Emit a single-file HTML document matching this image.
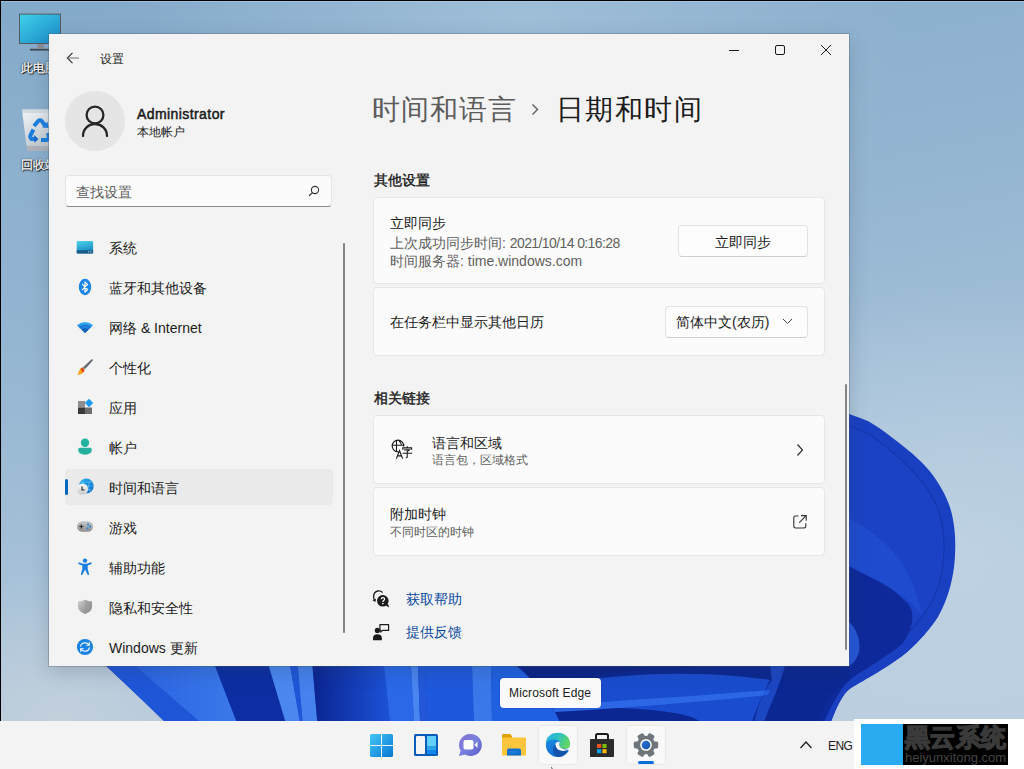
<!DOCTYPE html>
<html><head><meta charset="utf-8">
<style>
*{margin:0;padding:0;box-sizing:border-box}
html,body{width:1024px;height:769px;overflow:hidden}
body{position:relative;font-family:"Liberation Sans",sans-serif;color:#1b1b1b;background:#8fb2cf}
.a{position:absolute;white-space:nowrap}
#wall{position:absolute;left:0;top:0;width:1024px;height:769px}
#win{position:absolute;left:49px;top:34px;width:800px;height:632px;background:#f3f3f3;box-shadow:0 0 0 1px rgba(70,90,110,.3),0 6px 18px rgba(40,60,80,.22)}
.t14{font-size:14px;line-height:14px}
.t12{font-size:12px;line-height:12px}
.card{position:absolute;left:324px;width:452px;background:#fbfbfb;border:1px solid #e6e6e6;border-radius:4px}
.btn{position:absolute;background:#fdfdfd;border:1px solid #e3e3e3;border-bottom-color:#cfcfcf;border-radius:4px}
.sec{color:#5f5f5f}
.nav{position:absolute;left:60px;font-size:14px;line-height:14px;color:#1b1b1b}
.ico{position:absolute}
#taskbar{position:absolute;left:0;top:721px;width:1024px;height:48px;background:#f3f3f3}
</style></head><body>
<svg id="wall" width="1024" height="769" viewBox="0 0 1024 769">
<defs>
<linearGradient id="bg" x1="0" y1="0" x2="0.25" y2="1">
<stop offset="0" stop-color="#84aac9"/><stop offset="0.5" stop-color="#98b8d3"/><stop offset="1" stop-color="#b9cddf"/>
</linearGradient>
<radialGradient id="halo" cx="0.93" cy="0.72" r="0.35">
<stop offset="0" stop-color="#bed2e3" stop-opacity="0.9"/><stop offset="1" stop-color="#bed2e3" stop-opacity="0"/>
</radialGradient>
<linearGradient id="outer" x1="0" y1="0" x2="1" y2="0">
<stop offset="0" stop-color="#1a46cc"/><stop offset="1" stop-color="#2254da"/>
</linearGradient>
<linearGradient id="pet1" x1="0" y1="0" x2="1" y2="0">
<stop offset="0" stop-color="#2d6ae6"/><stop offset="1" stop-color="#1848c8"/>
</linearGradient>
<linearGradient id="dark" x1="0" y1="0" x2="1" y2="0">
<stop offset="0" stop-color="#0a2a98"/><stop offset="1" stop-color="#1a48c8"/>
</linearGradient>
<linearGradient id="inn" gradientUnits="userSpaceOnUse" x1="849" y1="0" x2="945" y2="0"><stop offset="0" stop-color="#0b2894"/><stop offset="0.5" stop-color="#1840c0"/><stop offset="1" stop-color="#1d48ca"/></linearGradient>
<linearGradient id="lobe" gradientUnits="userSpaceOnUse" x1="849" y1="0" x2="915" y2="0"><stop offset="0" stop-color="#0e2c9c"/><stop offset="1" stop-color="#2152d4"/></linearGradient>
<linearGradient id="b2" x1="0" y1="0" x2="1" y2="0"><stop offset="0" stop-color="#2a64e2"/><stop offset="1" stop-color="#3a78ea"/></linearGradient>
<linearGradient id="b3" x1="0" y1="0" x2="1" y2="0"><stop offset="0" stop-color="#0a2490"/><stop offset="1" stop-color="#1c52d8"/></linearGradient>
<radialGradient id="tophi" gradientUnits="userSpaceOnUse" cx="520" cy="10" r="380"><stop offset="0" stop-color="#a6c3dc" stop-opacity="0.75"/><stop offset="1" stop-color="#a6c3dc" stop-opacity="0"/></radialGradient>
<radialGradient id="blhi" gradientUnits="userSpaceOnUse" cx="60" cy="730" r="160"><stop offset="0" stop-color="#c8d2dc" stop-opacity="0.8"/><stop offset="1" stop-color="#c8d2dc" stop-opacity="0"/></radialGradient>
</defs>
<rect width="1024" height="769" fill="url(#bg)"/>
<rect width="1024" height="769" fill="url(#halo)"/>
<rect width="1024" height="769" fill="url(#tophi)"/>
<rect width="1024" height="769" fill="url(#blhi)"/>
<!-- base bloom -->
<path d="M849.4 414.1 C853.0 415.6 864.1 419.0 871.2 422.9 C878.3 426.8 885.1 432.2 892.0 437.4 C898.9 442.6 906.6 448.4 912.8 454.0 C919.0 459.6 924.5 464.8 929.4 470.7 C934.3 476.6 938.5 483.2 942.0 489.4 C945.5 495.6 948.1 501.4 950.2 508.0 C952.3 514.6 953.6 522.0 954.4 529.0 C955.2 536.0 955.4 542.7 955.2 550.0 C955.0 557.3 954.5 565.2 953.2 572.8 C951.9 580.4 950.0 588.3 947.5 595.5 C945.0 602.7 942.2 609.5 938.4 616.0 C934.6 622.5 930.0 628.1 924.7 634.2 C919.4 640.3 913.3 646.7 906.5 652.4 C899.7 658.1 891.3 663.5 883.7 668.4 C876.1 673.3 867.1 678.2 861.0 682.0 C854.9 685.8 851.1 687.3 847.3 691.1 C843.5 694.9 840.9 699.9 838.2 704.8 C835.6 709.7 833.4 716.5 831.4 720.7 C829.4 724.9 826.9 728.5 826.0 730.0 L174.3 730 L106 666 L70 630 L600 420 Z" fill="#1a40c2"/>
<path d="M849.0 426.0 C852.2 427.3 861.8 430.5 868.0 434.0 C874.2 437.5 880.0 442.3 886.0 447.0 C892.0 451.7 898.5 456.8 904.0 462.0 C909.5 467.2 914.5 472.5 919.0 478.0 C923.5 483.5 927.7 489.3 931.0 495.0 C934.3 500.7 937.0 506.0 939.0 512.0 C941.0 518.0 942.2 524.7 943.0 531.0 C943.8 537.3 944.2 543.5 944.0 550.0 C943.8 556.5 943.2 563.3 942.0 570.0 C940.8 576.7 939.3 583.7 937.0 590.0 C934.7 596.3 931.7 602.2 928.0 608.0 C924.3 613.8 920.0 619.3 915.0 625.0 C910.0 630.7 904.5 636.7 898.0 642.0 C891.5 647.3 883.2 652.2 876.0 657.0 C868.8 661.8 860.7 667.0 855.0 671.0 C849.3 675.0 846.2 676.8 842.0 681.0 C837.8 685.2 833.3 690.8 830.0 696.0 C826.7 701.2 824.3 706.3 822.0 712.0 C819.7 717.7 817.0 727.0 816.0 730.0 L700 730 L700 426 Z" fill="#1b42c4" stroke="#1636ae" stroke-width="1.2"/>
<path d="M849.0 560.0 C852.5 562.5 862.3 569.7 870.0 575.0 C877.7 580.3 888.0 585.8 895.0 592.0 C902.0 598.2 910.3 604.0 912.0 612.0 C913.7 620.0 910.3 632.0 905.0 640.0 C899.7 648.0 889.2 653.3 880.0 660.0 C870.8 666.7 857.5 673.3 850.0 680.0 C842.5 686.7 839.3 693.0 835.0 700.0 C830.7 707.0 825.8 718.3 824.0 722.0 L780 722 L780 560 Z" fill="#0e2a9a"/>
<path d="M849.0 518.0 C853.3 520.8 866.5 528.0 875.0 535.0 C883.5 542.0 893.3 550.8 900.0 560.0 C906.7 569.2 911.3 580.8 915.0 590.0 C918.7 599.2 920.8 610.8 922.0 615.0  C919.2 612.2 912.0 603.5 905.0 598.0 C898.0 592.5 887.5 586.3 880.0 582.0 C872.5 577.7 865.2 574.7 860.0 572.0 C854.8 569.3 850.8 567.0 849.0 566.0 Z" fill="#1f4ccf"/>
<path d="M849 622 C856 628 861 640 859 652 C857 660 852 664 849 666 Z" fill="#2656d6"/>
<path d="M938.4 616.0 C936.1 619.0 930.0 628.1 924.7 634.2 C919.4 640.3 913.3 646.7 906.5 652.4 C899.7 658.1 891.3 663.5 883.7 668.4 C876.1 673.3 867.1 678.2 861.0 682.0 C854.9 685.8 851.1 687.3 847.3 691.1 C843.5 694.9 840.9 699.9 838.2 704.8 C835.6 709.7 832.5 718.1 831.4 720.7 L826 722  C827.0 719.3 829.3 711.0 832.0 706.0 C834.7 701.0 838.0 696.3 842.0 692.0 C846.0 687.7 850.0 684.5 856.0 680.0 C862.0 675.5 870.7 670.2 878.0 665.0 C885.3 659.8 893.3 654.5 900.0 649.0 C906.7 643.5 913.0 637.5 918.0 632.0 C923.0 626.5 928.0 618.7 930.0 616.0 Z" fill="#1a3fc0"/>
<path d="M106 665 L164.7 722 L200 722 L134 665 Z" fill="#1f56d8"/>
<path d="M134 665 L200 722 L236.7 722 L214.7 665 Z" fill="url(#b2)"/>
<path d="M214.7 665 L236.7 722 L285.5 722 L268.5 665 Z" fill="#0c2ea2"/>
<path d="M268.5 665 L285.5 722 L300 722 L290 665 Z" fill="#4a88f0"/>
<path d="M290 665 L300 722 L302.6 722 L297.8 665 Z" fill="#1f56d8"/>
<path d="M297.8 665 L302.6 722 L317.3 722 L312.4 665 Z" fill="#4582ee"/>
<path d="M312.4 665 L317.3 722 L390 722 L384 665 Z" fill="url(#b3)"/>
<path d="M384 665 L390 722 L414 722 L411 665 Z" fill="#2a68e8"/>
<path d="M411 665 L414 722 L420 722 L418 665 Z" fill="#4a86f0"/>
<path d="M418 665 L420 722 L427 722 L425 665 Z" fill="#2258d8"/>
<path d="M425 665 L427 722 L474 722 L472 665 Z" fill="#1e58dc"/>
<path d="M472 665 L474 722 L492 722 L491 665 Z" fill="#3a78ea"/>
<path d="M491 665 L492 722 L560 722 C550 700 535 680 515 665 Z" fill="#2060e0"/>
<path d="M515 665 C535 680 550 700 560 722 L818 722 C822 712 826 701 832 694 L849 680 L849 665 Z" fill="#0b2792"/>
<path d="M535 684 C600 672 680 666 760 666 L520 665 Z" fill="#0a2388"/>
<path d="M540 688 C600 675 690 668 770 680 C765 690 760 700 752 722 L700 722 C690 712 640 706 553 708 C550 700 545 694 540 688 Z" fill="#1a4ccf"/>
<path d="M552 706 C620 700 700 696 770 690 L768 695 C700 702 620 708 555 712 Z" fill="#2c68e6"/>
<path d="M770 666 L785 666 C778 690 770 705 764 722 L754 722 C758 705 764 690 772 680 Z" fill="#2456d8" opacity="0.7"/>

</svg>
<div class="a" style="left:0;top:0;width:1024px;height:1px;background:#000"></div>
<div class="a" style="left:0;top:1px;width:1024px;height:1px;background:rgba(170,205,235,.6)"></div>
<div class="a" style="left:0;top:0;width:1px;height:721px;background:#000"></div>


<!-- desktop icons -->
<svg class="a" style="left:18px;top:12px" width="45" height="40" viewBox="0 0 45 40"><defs><linearGradient id="mon" x1="0" y1="0" x2="1" y2="1"><stop offset="0" stop-color="#3fd0e8"/><stop offset="1" stop-color="#1a88c8"/></linearGradient></defs><rect x="1" y="1.6" width="42" height="30.4" fill="#555a60"/><rect x="2" y="2.6" width="40" height="28.4" fill="url(#mon)"/><rect x="19.3" y="32" width="6.7" height="4.5" fill="#8a8f94"/><rect x="12" y="36.8" width="22" height="1.8" fill="#454a50"/></svg>
<div class="a" style="left:21px;top:61px;font-size:12px;line-height:14px;color:#fff;-webkit-text-stroke:0.3px #fff;text-shadow:0 0 2px #000,1px 1px 1px #000,0 0 1px #000">此电脑</div>
<svg class="a" style="left:20px;top:106px" width="29" height="46" viewBox="0 0 29 46"><defs><linearGradient id="rb" x1="0" y1="0" x2="0.3" y2="1"><stop offset="0" stop-color="#eef2f5"/><stop offset="1" stop-color="#c4ccd2"/></linearGradient></defs><path d="M2 3.2 H30 V7 H2.4 Z" fill="#d4dbe0"/><path d="M2.4 7 H30 V40 H6.5 Z" fill="url(#rb)"/><path d="M6.5 40 H30 V45 H7 Z" fill="#adb3b8"/><path d="M14 20 L18.5 14.8 Q20 13.6 21.6 14.8 L25 19.5" fill="none" stroke="#1c7fe0" stroke-width="4"/><path d="M22 21.5 L28.5 22 L27.5 15.5 Z" fill="#1c7fe0"/><path d="M13.5 23.5 L10.4 29.5 Q9.8 31.5 11.5 33 L15.5 33" fill="none" stroke="#1c7fe0" stroke-width="4"/><path d="M14.5 36.8 L18.5 33 L14 29 Z" fill="#1466c8"/><path d="M21 34 L26.5 34 Q28.5 33.5 29 31.5 L28 27" fill="none" stroke="#1c7fe0" stroke-width="4"/></svg>
<div class="a" style="left:21px;top:158px;font-size:12px;line-height:14px;color:#fff;-webkit-text-stroke:0.3px #fff;text-shadow:0 0 2px #000,1px 1px 1px #000,0 0 1px #000">回收站</div>

<div id="win"></div>
<!-- title bar -->
<svg class="a" style="left:66px;top:52px" width="14" height="12" viewBox="0 0 14 12"><path d="M6.5 0.8 L1.3 6 L6.5 11.2" fill="none" stroke="#303030" stroke-width="1.1"/><path d="M1.5 6 H13" stroke="#7a7a7a" stroke-width="1.1"/></svg>
<div class="a t12" style="left:100px;top:53px;color:#1b1b1b">设置</div>
<svg class="a" style="left:728px;top:44px" width="106" height="12" viewBox="0 0 106 12"><path d="M1 6.5 H11" stroke="#1b1b1b" stroke-width="1"/><rect x="47.5" y="1.5" width="9" height="9" rx="1.5" fill="none" stroke="#1b1b1b" stroke-width="1"/><path d="M93 1 L103 11 M103 1 L93 11" stroke="#1b1b1b" stroke-width="1"/></svg>
<!-- user -->
<div class="a" style="left:65px;top:91px;width:60px;height:60px;border-radius:50%;background:#e5e5e5"></div>
<svg class="a" style="left:80px;top:104px" width="30" height="34" viewBox="0 0 30 34"><circle cx="15" cy="11" r="8.4" fill="none" stroke="#262626" stroke-width="2.3"/><path d="M3 32 C3 25 8.5 20 15 20 C21.5 20 27 25 27 32" fill="none" stroke="#262626" stroke-width="2.3" stroke-linecap="round"/></svg>
<div class="a" style="left:137px;top:107px;font-size:14px;line-height:14px;-webkit-text-stroke:0.5px #1b1b1b;color:#1b1b1b;letter-spacing:0.42px">Administrator</div>
<div class="a t12" style="left:137px;top:126px">本地帐户</div>
<!-- search -->
<div class="a" style="left:65px;top:175px;width:267px;height:32px;background:#fbfbfb;border:1px solid #e5e5e5;border-bottom:1px solid #8c8c8c;border-radius:4px"></div>
<div class="a t14" style="left:76px;top:185px;color:#5d5d5d">查找设置</div>
<svg class="a" style="left:308px;top:185px" width="12" height="12" viewBox="0 0 12 12"><circle cx="7" cy="5" r="3.6" fill="none" stroke="#303030" stroke-width="1.1"/><path d="M4.4 7.6 L1 11" stroke="#303030" stroke-width="1.1"/></svg>
<!-- nav -->
<div class="a" style="left:65px;top:469px;width:268px;height:36px;background:#eaeaea;border-radius:4px"></div>
<div class="a" style="left:65px;top:479px;width:3px;height:16px;background:#0067c0;border-radius:2px"></div>
<div class="nav a" style="left:109px;top:241px">系统</div>
<div class="nav a" style="left:109px;top:281px">蓝牙和其他设备</div>
<div class="nav a" style="left:109px;top:321px">网络 &amp; Internet</div>
<div class="nav a" style="left:109px;top:361px">个性化</div>
<div class="nav a" style="left:109px;top:401px">应用</div>
<div class="nav a" style="left:109px;top:441px">帐户</div>
<div class="nav a" style="left:109px;top:481px">时间和语言</div>
<div class="nav a" style="left:109px;top:521px">游戏</div>
<div class="nav a" style="left:109px;top:561px">辅助功能</div>
<div class="nav a" style="left:109px;top:601px">隐私和安全性</div>
<div class="nav a" style="left:109px;top:641px">Windows 更新</div>
<div class="a" style="left:343px;top:243px;width:2px;height:390px;background:#858585;border-radius:1px"></div>
<!-- content -->
<div class="a" style="left:372px;top:96px;font-size:28px;line-height:28px;color:#5c5c5c;letter-spacing:0.9px">时间和语言</div>
<svg class="a" style="left:530px;top:103px" width="10" height="13" viewBox="0 0 10 13"><path d="M2.5 1.5 L7.5 6.5 L2.5 11.5" fill="none" stroke="#5c5c5c" stroke-width="1.4"/></svg>
<div class="a" style="left:556px;top:96px;font-size:28px;line-height:28px;color:#1b1b1b;letter-spacing:1.4px">日期和时间</div>
<div class="a t14" style="left:374px;top:173px;-webkit-text-stroke:0.4px #1b1b1b">其他设置</div>
<div class="card" style="left:373px;top:197px;width:452px;height:87px"></div>
<div class="a t14" style="left:390px;top:216px">立即同步</div>
<div class="a t14 sec" style="left:390px;top:236px">上次成功同步时间: <span style="letter-spacing:-0.6px">2021/10/14 0:16:28</span></div>
<div class="a t14 sec" style="left:390px;top:254px">时间服务器: time.windows.com</div>
<div class="btn" style="left:678px;top:225px;width:130px;height:32px"></div>
<div class="a t14" style="left:678px;top:235px;width:130px;text-align:center">立即同步</div>
<div class="card" style="left:373px;top:287px;width:452px;height:69px"></div>
<div class="a t14" style="left:390px;top:315px">在任务栏中显示其他日历</div>
<div class="btn" style="left:665px;top:306px;width:143px;height:32px"></div>
<div class="a t14" style="left:676px;top:315px">简体中文(农历)</div>
<svg class="a" style="left:782px;top:318px" width="11" height="7" viewBox="0 0 11 7"><path d="M1 1 L5.5 5.5 L10 1" fill="none" stroke="#404040" stroke-width="1"/></svg>
<div class="a t14" style="left:374px;top:391px;-webkit-text-stroke:0.4px #1b1b1b">相关链接</div>
<div class="card" style="left:373px;top:415px;width:452px;height:69px"></div>
<div class="a t14" style="left:432px;top:436px">语言和区域</div>
<div class="a t12 sec" style="left:432px;top:454px">语言包，区域格式</div>
<svg class="a" style="left:795px;top:443px" width="10" height="14" viewBox="0 0 10 14"><path d="M2.5 1.5 L7.5 7 L2.5 12.5" fill="none" stroke="#303030" stroke-width="1.2"/></svg>
<div class="card" style="left:373px;top:487px;width:452px;height:69px"></div>
<div class="a t14" style="left:390px;top:507px">附加时钟</div>
<div class="a t12 sec" style="left:390px;top:526px">不同时区的时钟</div>
<div class="a t14" style="left:406px;top:592px;color:#0a4a9e">获取帮助</div>
<div class="a t14" style="left:406px;top:625px;color:#0a4a9e">提供反馈</div>

<!-- nav icons -->
<svg class="a" style="left:76px;top:240px" width="18" height="15" viewBox="0 0 18 15"><defs><linearGradient id="sy" x1="0" y1="0" x2="0.3" y2="1"><stop offset="0" stop-color="#4fd3ea"/><stop offset="1" stop-color="#1489c2"/></linearGradient></defs><rect x="0.7" y="0.9" width="16.4" height="12.6" rx="1.3" fill="url(#sy)"/><path d="M0.7 10.3 H17.1 V12.2 Q17.1 13.5 15.8 13.5 H2 Q0.7 13.5 0.7 12.2 Z" fill="#1c5a86"/><rect x="12.2" y="11.3" width="1.1" height="1" fill="#cfe8f5"/><rect x="14.3" y="11.3" width="1.1" height="1" fill="#cfe8f5"/></svg>
<svg class="a" style="left:78px;top:278px" width="14" height="18" viewBox="0 0 14 18"><ellipse cx="7" cy="9" rx="6.2" ry="8.2" fill="#1a86ea"/><path d="M4 5.9 L9.6 11.6 L7 14.1 V3.9 L9.6 6.4 L4 12.1" fill="none" stroke="#fff" stroke-width="1.2" stroke-linejoin="round"/></svg>
<svg class="a" style="left:76px;top:321px" width="18" height="13" viewBox="0 0 18 13"><defs><linearGradient id="wf" x1="0" y1="0" x2="0" y2="1"><stop offset="0" stop-color="#36b0f5"/><stop offset="0.55" stop-color="#1c7fdc"/><stop offset="1" stop-color="#0b4fa6"/></linearGradient></defs><path d="M1 4.2 Q9 -2.2 17 4.2 L9 12.2 Z" fill="url(#wf)"/><path d="M3.6 6.8 Q9 2.2 14.4 6.8" fill="none" stroke="#1468c6" stroke-width="1"/><path d="M6 9.2 Q9 6.4 12 9.2" fill="none" stroke="#0c4f9e" stroke-width="1"/></svg>
<svg class="a" style="left:76px;top:358px" width="18" height="18" viewBox="0 0 18 18"><path d="M16.2 1.2 Q17 2 16.4 2.8 L8.6 11.4 L6.6 9.4 L15.2 1.6 Q15.8 1 16.2 1.2 Z" fill="#7e858c"/><path d="M16.2 1.2 Q17 2 16.4 2.8 L9.6 10.3 L8.5 9.2 Z" fill="#5c636a"/><path d="M6.4 9.6 L8.4 11.6 Q8.3 14.2 6.2 15.6 Q4 17 1.2 16.8 Q2.6 15.2 3.2 12.8 Q3.8 10.2 6.4 9.6 Z" fill="#f7a21b"/><path d="M6.4 9.6 L8.4 11.6 Q8.3 13.4 7 14.6 Q5.6 13.2 5 11 Q5.4 10 6.4 9.6Z" fill="#e2421c"/></svg>
<svg class="a" style="left:77px;top:398px" width="17" height="17" viewBox="0 0 17 17"><rect x="1" y="3" width="7" height="6.5" fill="#8d8d8d"/><rect x="1" y="9.5" width="7" height="6.5" fill="#3a3a3a"/><rect x="8" y="9.5" width="7" height="6.5" fill="#6e6e6e"/><path d="M12 0.8 L16.2 5 L12 9.2 L7.8 5 Z" fill="#1a9bf0"/></svg>
<svg class="a" style="left:77px;top:438px" width="16" height="18" viewBox="0 0 16 18"><circle cx="8" cy="4.7" r="4.2" fill="#22b3a0"/><path d="M1.2 11.6 Q1.2 9.8 3 9.8 H13 Q14.8 9.8 14.8 11.6 Q14.8 16.7 8 16.7 Q1.2 16.7 1.2 11.6 Z" fill="#25b19d"/></svg>
<svg class="a" style="left:76px;top:477px" width="19" height="19" viewBox="0 0 19 19"><defs><linearGradient id="gl" x1="0" y1="0" x2="1" y2="1"><stop offset="0" stop-color="#29b6f0"/><stop offset="1" stop-color="#0c63c9"/></linearGradient><linearGradient id="ck" x1="0" y1="0" x2="0" y2="1"><stop offset="0" stop-color="#fafafa"/><stop offset="1" stop-color="#c8c8c8"/></linearGradient></defs><circle cx="10.3" cy="9" r="7.4" fill="url(#gl)"/><path d="M6 3.5 Q10.5 9 6.5 15 M14.5 3.5 Q10.2 9 14.5 15 M3 9 H17.6 M4.3 5.2 H16.4 M4.3 12.8 H16.4" stroke="#7fd0f5" stroke-width="0.7" fill="none" opacity="0.7"/><circle cx="6.5" cy="12.2" r="5.6" fill="url(#ck)"/><path d="M6 9.6 V12.8 H8.4" stroke="#333" stroke-width="1.2" fill="none"/></svg>
<svg class="a" style="left:76px;top:520px" width="18" height="13" viewBox="0 0 18 13"><defs><linearGradient id="gp" x1="0" y1="0" x2="0" y2="1"><stop offset="0" stop-color="#c9c9c9"/><stop offset="1" stop-color="#8e8e8e"/></linearGradient></defs><rect x="1" y="1.2" width="16" height="10.6" rx="5.3" fill="url(#gp)"/><path d="M3.3 6.5 H7.3 M5.3 4.5 V8.5" stroke="#2c2c2c" stroke-width="1.2"/><rect x="11.2" y="3.6" width="1.8" height="1.8" fill="#1a86e8"/><rect x="13.2" y="5.6" width="1.8" height="1.8" fill="#1a86e8"/><rect x="10.6" y="7.4" width="1.8" height="1.8" fill="#1a86e8"/></svg>
<svg class="a" style="left:77px;top:558px" width="16" height="18" viewBox="0 0 16 18"><circle cx="8" cy="2.6" r="2.2" fill="#1a7fe0"/><path d="M1.4 4.8 Q1 5.8 2 6.2 L5.3 7.5 V10.8 L3.9 16.3 Q3.8 17 4.6 17.1 Q5.3 17.2 5.5 16.5 L8 11.6 L10.5 16.5 Q10.7 17.2 11.4 17.1 Q12.2 17 12.1 16.3 L10.7 10.8 V7.5 L14 6.2 Q15 5.8 14.6 4.8 Q14.2 4 13.4 4.4 L10 5.8 H6 L2.6 4.4 Q1.8 4 1.4 4.8 Z" fill="#1a7fe0"/></svg>
<svg class="a" style="left:77px;top:599px" width="16" height="16" viewBox="0 0 16 16"><defs><linearGradient id="sh" x1="0" y1="0" x2="1" y2="1"><stop offset="0" stop-color="#d0d0d0"/><stop offset="1" stop-color="#7a7a7a"/></linearGradient></defs><path d="M8 0.8 Q11.5 2.8 15 2.6 V7.6 Q15 12.6 8 15 Q1 12.6 1 7.6 V2.6 Q4.5 2.8 8 0.8 Z" fill="url(#sh)"/><path d="M8 0.8 Q11.5 2.8 15 2.6 V7.6 Q15 12.6 8 15 Z" fill="#9a9a9a" opacity="0.6"/></svg>
<svg class="a" style="left:76px;top:638px" width="18" height="18" viewBox="0 0 18 18"><circle cx="9" cy="9" r="8.1" fill="#1a82e2"/><path d="M4.6 8.6 Q4.9 4.9 9 4.7 Q11.4 4.7 12.8 6.6" fill="none" stroke="#fff" stroke-width="1.1"/><path d="M13.3 4.3 V7.3 H10.3" fill="none" stroke="#fff" stroke-width="1.1"/><path d="M13.4 9.4 Q13.1 13.1 9 13.3 Q6.6 13.3 5.2 11.4" fill="none" stroke="#fff" stroke-width="1.1"/><path d="M4.7 13.7 V10.7 H7.7" fill="none" stroke="#fff" stroke-width="1.1"/></svg>
<!-- content icons -->
<svg class="a" style="left:388px;top:436px" width="25" height="24" viewBox="0 0 25 24"><circle cx="10" cy="10" r="5.8" fill="none" stroke="#1b1b1b" stroke-width="1.2"/><path d="M4.2 9.2 H15.8 M8.5 4.3 V15.6 M10.8 4.5 Q13.4 6.6 13.5 9.2" fill="none" stroke="#1b1b1b" stroke-width="1.1"/><path d="M10.4 10.6 H25 V24 H10.4 Z" fill="#fbfbfb"/><path d="M8.4 22.6 L11.5 14.6 L14.6 22.6 M9.6 19.8 H13.4" fill="none" stroke="#1b1b1b" stroke-width="1.2"/><path d="M19.2 10.3 V11.8 M14.8 13.8 V11.9 H23.6 V13.8 M16.2 13.9 H21.4 L19.2 15.6 V21 Q19.2 21.9 17.8 21.7 M14.6 17.3 H24.2" fill="none" stroke="#1b1b1b" stroke-width="1.1"/></svg>
<svg class="a" style="left:792px;top:514px" width="16" height="16" viewBox="0 0 16 16"><path d="M6.5 2 H3.5 Q1.8 2 1.8 3.7 V12.3 Q1.8 14 3.5 14 H12.1 Q13.8 14 13.8 12.3 V9.2" fill="none" stroke="#303030" stroke-width="1.1"/><path d="M9 1.6 H14.2 V6.8 M14.2 1.6 L7.2 8.6" fill="none" stroke="#303030" stroke-width="1.1"/></svg>
<svg class="a" style="left:371px;top:589px" width="20" height="20" viewBox="0 0 20 20"><path d="M11.6 3.4 Q9.6 1.6 6.8 2 Q2.8 2.8 2.6 7.6 Q2.6 10.2 3.8 11.6" fill="none" stroke="#1b1b1b" stroke-width="1.3"/><path d="M1.4 11.2 L4.4 13 L5 9.8 Z" fill="#1b1b1b"/><circle cx="11.8" cy="11.8" r="5.8" fill="#1b1b1b"/><path d="M14.8 16.4 L18.2 18.6 L17 14.8 Z" fill="#1b1b1b"/><path d="M10.2 10.2 Q10.2 8.6 11.9 8.6 Q13.6 8.6 13.6 10.1 Q13.6 11.1 12.6 11.6 Q11.9 12 11.9 13" fill="none" stroke="#fff" stroke-width="1.2"/><circle cx="11.9" cy="14.6" r="0.8" fill="#fff"/></svg>
<svg class="a" style="left:371px;top:622px" width="20" height="20" viewBox="0 0 20 20"><path d="M8.9 2.7 H17.6 V8.4 H11.6 L9.8 10 V8.4 H8.9 Z" fill="none" stroke="#1b1b1b" stroke-width="1.2" stroke-linejoin="round"/><circle cx="6.4" cy="8.4" r="2.6" fill="#1b1b1b"/><path d="M2 18.2 V16 Q2 12.2 6.4 12.2 Q10.9 12.2 10.9 16 V18.2 Z" fill="#1b1b1b"/></svg>
<div class="a" style="left:845px;top:384px;width:2px;height:266px;background:#858585;border-radius:1px"></div>


<div id="taskbar"></div>
<!-- tooltip -->
<div class="a" style="left:500px;top:678px;width:101px;height:30px;background:#f9f9f9;border-radius:4px;box-shadow:0 0 0 1px rgba(0,0,0,.08)"></div>
<div class="a" style="left:509px;top:687px;font-size:12px;line-height:12px;color:#1b1b1b;letter-spacing:0.15px">Microsoft Edge</div>
<!-- taskbar icons -->
<svg class="a" style="left:369px;top:733px" width="25" height="25" viewBox="0 0 25 25"><defs><linearGradient id="st" x1="0" y1="0" x2="1" y2="1"><stop offset="0" stop-color="#45c6f7"/><stop offset="1" stop-color="#0677d2"/></linearGradient></defs><path d="M1 2.5 Q1 1 2.5 1 H12 V12 H1 Z M13 1 H22.5 Q24 1 24 2.5 V12 H13 Z M1 13 H12 V24 H2.5 Q1 24 1 22.5 Z M13 13 H24 V22.5 Q24 24 22.5 24 H13 Z" fill="url(#st)"/></svg>
<svg class="a" style="left:413px;top:733px" width="26" height="24" viewBox="0 0 26 24"><rect x="1" y="1" width="24" height="22" rx="1.5" fill="#0b5cb8"/><rect x="3" y="3" width="9" height="18" rx="1" fill="#f4f4f4"/><rect x="14" y="3" width="9" height="10.5" fill="#62d0fa"/><rect x="14" y="13.5" width="9" height="4" fill="#2aa6ee"/><rect x="14" y="17.5" width="9" height="3.5" fill="#0e88ee"/></svg>
<svg class="a" style="left:458px;top:733px" width="25" height="25" viewBox="0 0 25 25"><defs><linearGradient id="ch" x1="0" y1="0" x2="1" y2="1"><stop offset="0" stop-color="#8a74cc"/><stop offset="0.5" stop-color="#7780e0"/><stop offset="1" stop-color="#5a5cc4"/></linearGradient></defs><path d="M12.2 1 A11.2 11 0 1 1 7 21.5 L1 23 L2.6 17.6 A11.2 11 0 0 1 12.2 1 Z" fill="url(#ch)"/><rect x="5.5" y="7" width="10" height="9.5" rx="2" fill="#fbfbfb"/><path d="M16.5 11.7 L19.5 8.6 V15 Z" fill="#fbfbfb"/></svg>
<svg class="a" style="left:501px;top:733px" width="26" height="24" viewBox="0 0 26 24"><path d="M1 2.2 Q1 1 2.2 1 H9 L11 3 V6 H1 Z" fill="#e0a100"/><path d="M1 4.5 H24 Q25 4.5 25 5.5 V22.5 H1 Z" fill="#fcc63c"/><path d="M6 17.5 Q6 15.6 7.8 15.6 H18.2 Q20 15.6 20 17.5 V22.5 H6 Z" fill="#1170cf"/><rect x="9" y="18.6" width="8" height="0.8" fill="#3a90e0"/></svg>
<div class="a" style="left:539px;top:726px;width:38px;height:38px;background:#f9f9f9;border-radius:4px;box-shadow:0 0 0 1px rgba(0,0,0,.04)"></div>
<svg class="a" style="left:543px;top:730px" width="30" height="30" viewBox="0 0 30 30"><defs><linearGradient id="e0" x1="0" y1="0" x2="0.3" y2="1"><stop offset="0" stop-color="#1f96e6"/><stop offset="1" stop-color="#0d6ad2"/></linearGradient><linearGradient id="e1" x1="0" y1="0" x2="1" y2="0.4"><stop offset="0" stop-color="#22ade8"/><stop offset="0.5" stop-color="#2cc0c4"/><stop offset="1" stop-color="#5fd666"/></linearGradient></defs><circle cx="15" cy="15" r="12.1" fill="url(#e0)"/><path d="M2.9 12.2 C4 6 9 2.8 15 2.8 C22 2.8 27.1 8 27.1 14 C27.1 17 25.5 18.7 23 18.7 C20 18.7 16.5 18 16.2 15.5 C16 13.5 17.2 12.4 17.3 11.8 C15.5 10 13.5 9.4 11 9.4 C7.8 9.4 4.6 10.5 2.9 12.2 Z" fill="url(#e1)"/><path d="M12.4 14.6 C12.6 12.6 14.5 11.5 16.9 11.9 C16.2 13 16 14.5 16.4 16 C17 18 19.5 19.1 22.5 19.4 C23.5 19.5 24.5 19.6 25 20.2 C21.5 21.3 18.5 21.3 16 20.2 C13.8 19.2 12.3 17 12.4 14.6 Z" fill="#f9f9f9"/><path d="M21 18.6 C23.5 19.4 24.6 19.6 25 20.2 L28.5 21.5 L28.5 13 L27.1 14 C27.1 17 25.5 18.7 23 18.7 Z" fill="#f9f9f9"/><path d="M12.4 14.6 C12.3 17 13.8 19.2 16 20.2 C18.5 21.3 21.5 21.3 25 20.2 C23 23.8 20 26.6 16 27 C13 27.2 10.6 25 10.2 21 C10 18 10.8 15.5 12.4 14.6 Z" fill="#1552ac"/></svg>
<svg class="a" style="left:589px;top:732px" width="26" height="26" viewBox="0 0 26 26"><path d="M7 7 V3.5 Q7 2 8.5 2 H17.5 Q19 2 19 3.5 V7" fill="none" stroke="#1b1b1b" stroke-width="2"/><rect x="1" y="7" width="24" height="18" rx="0.8" fill="#2b2b2b"/><rect x="8" y="12" width="4.2" height="4" fill="#f25022"/><rect x="13.4" y="12" width="4.2" height="4" fill="#7fba00"/><rect x="8" y="17.2" width="4.2" height="4" fill="#00a4ef"/><rect x="13.4" y="17.2" width="4.2" height="4" fill="#ffb900"/></svg>
<div class="a" style="left:627px;top:726px;width:38px;height:38px;background:#f9f9f9;border-radius:4px;box-shadow:0 0 0 1px rgba(0,0,0,.04)"></div>
<svg class="a" style="left:633px;top:732px" width="26" height="26" viewBox="0 0 26 26"><defs><linearGradient id="gb" x1="0" y1="0" x2="1" y2="1"><stop offset="0" stop-color="#2a78d8"/><stop offset="1" stop-color="#1450a8"/></linearGradient><rect id="tooth" x="-3.4" y="-12.2" width="6.8" height="5.5" rx="1.6"/></defs><g transform="translate(13 13)" fill="#6e757c"><circle r="9.2"/><use href="#tooth" transform="rotate(30)"/><use href="#tooth" transform="rotate(90)"/><use href="#tooth" transform="rotate(150)"/><use href="#tooth" transform="rotate(210)"/><use href="#tooth" transform="rotate(270)"/><use href="#tooth" transform="rotate(330)"/><circle r="5.9" fill="#f2f2f2"/><circle r="4.3" fill="url(#gb)"/></g></svg>
<div class="a" style="left:638px;top:761px;width:16px;height:3px;background:#0a6fd6;border-radius:2px"></div>
<svg class="a" style="left:799px;top:739px" width="14" height="11" viewBox="0 0 14 11"><path d="M1.5 9 L7 3 L12.5 9" fill="none" stroke="#1b1b1b" stroke-width="1.2"/></svg>
<div class="a" style="left:828px;top:740px;font-size:12px;line-height:12px;color:#1b1b1b;letter-spacing:-0.6px">ENG</div>
<svg class="a" style="left:549px;top:765px" width="6" height="4" viewBox="0 0 6 4"><path d="M2 4 L2 0.6 L4.4 4 Z" fill="#000" stroke="#fff" stroke-width="0.8"/></svg>
<!-- watermark -->
<div class="a" style="left:854px;top:719px;width:170px;height:50px;background:#fff"></div>
<div class="a" style="left:861px;top:724px;width:42px;height:41px;background:#2aaaf0"></div>
<div class="a" style="left:903px;top:724px;width:105px;height:41px;background:#000"></div>
<div class="a" style="left:905px;top:725px;font-size:25px;line-height:25px;font-weight:bold;-webkit-text-stroke:1.3px #3a3a3a;color:#3a3a3a;letter-spacing:0.3px">黑云系统</div>
<div class="a" style="left:905px;top:751px;font-size:13px;line-height:13px;color:#454545">heiyunxitong.com</div>

</body></html>
